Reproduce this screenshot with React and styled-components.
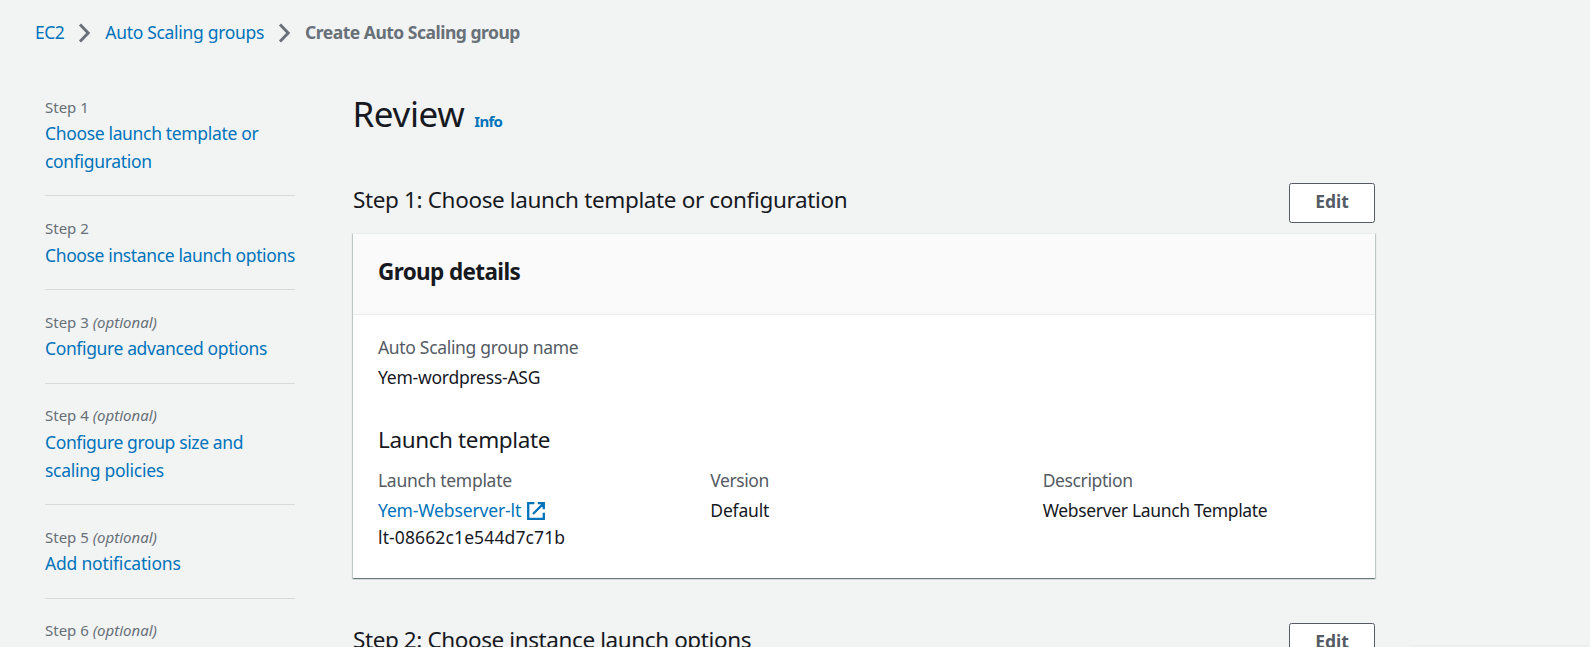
import React from "react";
import styled, { createGlobalStyle } from "styled-components";

const GlobalStyle = createGlobalStyle`
  * { box-sizing: border-box; }
  html, body { margin: 0; height: 100%; overflow: hidden; background: #f2f3f3; }
  body {
    font-family: "Noto Sans", "Open Sans", sans-serif;
    font-size: 17.5px;
    line-height: 27.5px;
    color: #16191f;
  }
`;

const Page = styled.div`
  height: 647px;
  overflow: hidden;
  padding-top: 18.5px;
  position: relative;
`;

const Breadcrumbs = styled.nav`
  display: flex;
  align-items: center;
  height: 27.5px;
  padding-left: 35px;
`;

const Crumb = styled.a`
  color: #0073bb;
  letter-spacing: ${(p) => p.$track}px;
  white-space: nowrap;
`;

const CurrentCrumb = styled.span`
  color: #687078;
  font-weight: 700;
  letter-spacing: -0.5px;
  white-space: nowrap;
`;

const Chevron = styled.svg`
  display: block;
  width: 20px;
  height: 20px;
  margin: 2px 10px 0 11px;
  fill: none;
  stroke: #687078;
  stroke-width: 2.9;
`;

const Columns = styled.div`
  display: flex;
  align-items: flex-start;
  padding: 50.5px 0 0 45px;
`;

const StepNav = styled.ol`
  list-style: none;
  margin: 0;
  padding: 0;
  width: 250px;
  flex: none;
`;

const StepItem = styled.li`
  padding: 0 0 19.7px;
  & + & {
    border-top: 1px solid #d5dbdb;
    padding-top: 21.8px;
  }
`;

const StepLabel = styled.div`
  height: 20px;
  margin-bottom: 3.8px;
  font-size: 15px;
  line-height: 20px;
  color: #687078;
`;

const StepLink = styled.a`
  display: block;
  color: #0073bb;
  letter-spacing: ${(p) => p.$track}px;
  white-space: nowrap;
`;

const Main = styled.main`
  width: 1022px;
  margin-left: 58px;
  padding-top: 1px;
`;

const PageHeading = styled.header`
  display: flex;
  align-items: baseline;
  height: 45px;
  margin-bottom: 40.5px;
`;

const Title = styled.h1`
  margin: -3px 0 0 -0.5px;
  font-size: 35px;
  font-weight: 400;
  line-height: 37px;
  letter-spacing: -0.4px;
`;

const InfoLink = styled.a`
  margin-left: 10px;
  font-size: 15px;
  font-weight: 700;
  letter-spacing: -0.7px;
  color: #0073bb;
`;

const SectionBar = styled.div`
  display: flex;
  justify-content: space-between;
  align-items: flex-start;
  height: 50px;
`;

const SectionTitle = styled.h2`
  margin: 2.5px 0 0;
  font-size: 22.5px;
  font-weight: 400;
  line-height: 27.5px;
  letter-spacing: ${(p) => p.$track}px;
`;

const EditButton = styled.button`
  width: 86px;
  height: 40px;
  padding: 0 0 2px;
  border: 1px solid #545b64;
  border-radius: 2.5px;
  background: #fff;
  color: #545b64;
  font: 700 17.5px/27.5px "Noto Sans", sans-serif;
`;

const Panel = styled.section`
  border-top: 1px solid #eaeded;
  background: #fff;
  box-shadow: 0 1px 1px 0 rgba(0, 28, 36, 0.4), 1px 1px 1px 0 rgba(0, 28, 36, 0.15),
    -1px 1px 1px 0 rgba(0, 28, 36, 0.15);
  height: 345px;
  margin: -0.5px 0 45.5px;
`;

const PanelHeader = styled.div`
  height: 81.5px;
  padding: 24px 25px 0;
  background: #fafafa;
  border-bottom: 1px solid #eaeded;
`;

const PanelTitle = styled.h2`
  margin: 0;
  font-size: 22.5px;
  font-weight: 700;
  line-height: 27.5px;
  letter-spacing: -0.62px;
`;

const PanelBody = styled.div`
  padding: 18.5px 25px 0;
`;

const SubTitle = styled.h3`
  margin: 35.5px 0 13.5px;
  font-size: 22.5px;
  font-weight: 400;
  line-height: 27.5px;
  letter-spacing: -0.38px;
`;

const FieldGrid = styled.div`
  display: grid;
  grid-template-columns: repeat(3, 1fr);
  column-gap: 25px;
`;

const FieldLabel = styled.div`
  margin-bottom: 2.5px;
  color: #545b64;
  letter-spacing: ${(p) => p.$track}px;
`;

const FieldValue = styled.div`
  line-height: 27px;
  letter-spacing: ${(p) => p.$track}px;
`;

const ExternalLink = styled.a`
  display: flex;
  align-items: center;
  gap: 6px;
  color: #0073bb;
  letter-spacing: -0.14px;
`;

const ExternalIcon = styled.svg`
  display: block;
  width: 18px;
  height: 18px;
  fill: none;
  stroke: currentColor;
  stroke-width: 2.3;
`;

const CornerShade = styled.div`
  position: absolute;
  left: 1410px;
  right: 0;
  top: 649px;
  height: 10px;
  box-shadow: 0 0 5px rgba(0, 28, 36, 0.2);
`;

const steps = [
  { label: "Step 1", lines: [["Choose launch template or", -0.34], ["configuration", -0.32]] },
  { label: "Step 2", lines: [["Choose instance launch options", -0.37]] },
  { label: "Step 3", optional: true, lines: [["Configure advanced options", -0.37]] },
  { label: "Step 4", optional: true, lines: [["Configure group size and", -0.38], ["scaling policies", -0.28]] },
  { label: "Step 5", optional: true, lines: [["Add notifications", -0.19]] },
  { label: "Step 6", optional: true, lines: [["Add tags", -0.3]] },
];

const Separator = () => (
  <Chevron viewBox="0 0 20 20">
    <path d="M5 1.4 13.2 10 5 18.6" />
  </Chevron>
);

function Field({ label, labelTrack, track, children }) {
  return (
    <div>
      <FieldLabel $track={labelTrack}>{label}</FieldLabel>
      <FieldValue $track={track}>{children}</FieldValue>
    </div>
  );
}

export default function App() {
  return (
    <Page>
      <GlobalStyle />
      <Breadcrumbs>
        <Crumb $track={-0.5}>EC2</Crumb>
        <Separator />
        <Crumb $track={-0.31}>Auto Scaling groups</Crumb>
        <Separator />
        <CurrentCrumb>Create Auto Scaling group</CurrentCrumb>
      </Breadcrumbs>
      <Columns>
        <StepNav>
          {steps.map((step) => (
            <StepItem key={step.label}>
              <StepLabel>
                {step.label} {step.optional && <em>(optional)</em>}
              </StepLabel>
              {step.lines.map(([text, track]) => (
                <StepLink key={text} $track={track}>{text}</StepLink>
              ))}
            </StepItem>
          ))}
        </StepNav>
        <Main>
          <PageHeading>
            <Title>Review</Title>
            <InfoLink>Info</InfoLink>
          </PageHeading>
          <SectionBar>
            <SectionTitle $track={-0.36}>Step 1: Choose launch template or configuration</SectionTitle>
            <EditButton>Edit</EditButton>
          </SectionBar>
          <Panel>
            <PanelHeader>
              <PanelTitle>Group details</PanelTitle>
            </PanelHeader>
            <PanelBody>
              <Field label="Auto Scaling group name" labelTrack={-0.32} track={-0.24}>
                Yem-wordpress-ASG
              </Field>
              <SubTitle>Launch template</SubTitle>
              <FieldGrid>
                <Field label="Launch template" labelTrack={-0.3} track={0.12}>
                  <ExternalLink>
                    Yem-Webserver-lt
                    <ExternalIcon viewBox="0 0 18 18">
                      <path d="M7.4 1.2H1.2V16.8H16.8V10.8M10.8 1.2H16.8V7.2M16.4 1.6 6 12" />
                    </ExternalIcon>
                  </ExternalLink>
                  lt-08662c1e544d7c71b
                </Field>
                <Field label="Version" labelTrack={-0.42} track={-0.2}>Default</Field>
                <Field label="Description" labelTrack={-0.38} track={-0.33}>Webserver Launch Template</Field>
              </FieldGrid>
            </PanelBody>
          </Panel>
          <SectionBar>
            <SectionTitle $track={-0.4}>Step 2: Choose instance launch options</SectionTitle>
            <EditButton>Edit</EditButton>
          </SectionBar>
        </Main>
      </Columns>
      <CornerShade />
    </Page>
  );
}
